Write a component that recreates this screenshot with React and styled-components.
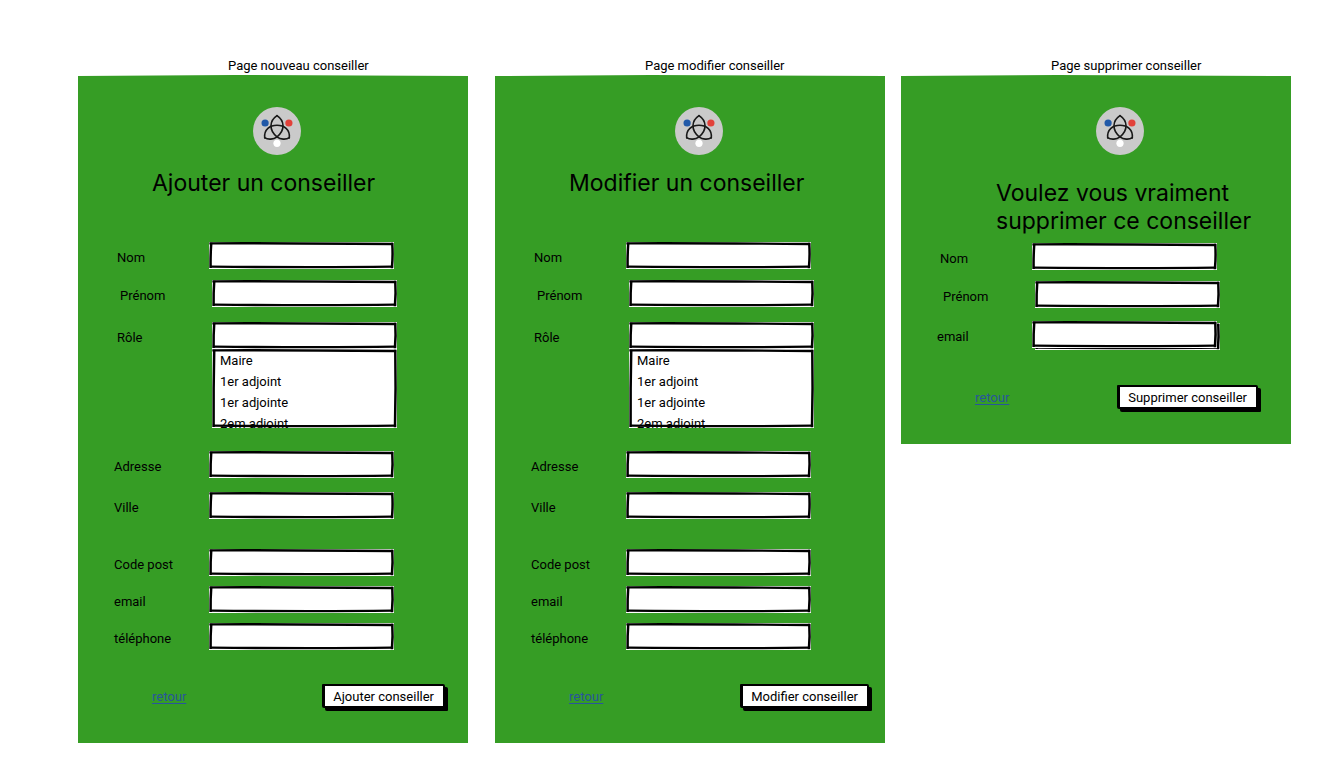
import React, { useId } from "react";
import styled, { createGlobalStyle } from "styled-components";

const GlobalStyle = createGlobalStyle`
  *, *::before, *::after { box-sizing: border-box; }
  body {
    margin: 0;
    background: #fff;
    color: #000;
    font: 13px/18px Roboto, "Liberation Sans", sans-serif;
  }
`;

const Board = styled.main`
  display: flex;
  align-items: flex-start;
  padding: 57px 32px 24px 78px;
`;

const Column = styled.section`
  flex: 1 1 0;
  min-width: 0;
  margin-left: ${(p) => p.$gap || 0}px;
`;

const Caption = styled.p`
  margin: 0;
  padding-left: 150px;
`;

const Panel = styled.form`
  display: flex;
  flex-direction: column;
  padding: 32px 0;
  background: #369d25;
  clip-path: polygon(0 1px, 40% 0, 100% 1px, 100% 50%, 100% 100%, 50% 100%, 0 100%);
`;

const Logo = styled.svg`
  width: 48px;
  height: 48px;
  margin-left: ${(p) => p.$indent}px;
`;

const Title = styled.h1`
  margin: ${(p) => p.$above}px 0 ${(p) => p.$below}px;
  padding-left: ${(p) => p.$indent}px;
  font: 400 23px/28px Inter, "Liberation Sans", sans-serif;
`;

const Row = styled.div`
  display: flex;
  align-items: flex-start;
  margin-top: ${(p) => p.$above || 0}px;
  padding-left: ${(p) => p.$indent}px;
`;

const Label = styled.label`
  flex: none;
  width: ${(p) => p.$width}px;
  padding-top: 7px;
`;

const Control = styled.div`
  position: relative;
  flex: 0 1 185px;
  min-width: 0;
`;

const Sketch = styled.svg`
  position: absolute;
  inset: 0;
  width: 100%;
  height: 100%;
  overflow: visible;
  pointer-events: none;
`;

const TextBox = styled.input`
  position: relative;
  display: block;
  width: 100%;
  height: 27px;
  padding: 0 8px;
  border: 0;
  outline: 0;
  background: transparent;
  font: inherit;
`;

const ListBox = styled.select`
  position: relative;
  display: block;
  width: 100%;
  height: 79px;
  padding: 4px 0 0;
  border: 0;
  outline: 0;
  appearance: none;
  overflow: hidden;
  scrollbar-width: none;
  background: transparent;
  color: #000;
  font: inherit;
`;

const Choice = styled.option`
  height: 21px;
  min-height: 21px;
  padding: 0 8px;
  line-height: 21px;
`;

const Footer = styled.footer`
  display: flex;
  align-items: flex-start;
  justify-content: space-between;
  margin-top: ${(p) => p.$above}px;
  padding: 0 ${(p) => p.$right}px 3px 74px;
`;

const BackLink = styled.a`
  margin-top: 4px;
  color: #28559c;
  text-underline-offset: 2px;
`;

const Submit = styled.button`
  height: 24px;
  margin-right: 3px;
  padding: 1px 9px 0 8px;
  border: 2px solid #000;
  border-left-width: 3px;
  border-radius: 1px 2px 1px 2px;
  background: #fff;
  box-shadow: 3px 3px 0 #000;
  color: #000;
  font: inherit;
`;

function CouncilLogo({ indent }) {
  return (
    <Logo $indent={indent} viewBox="0 0 48 48" role="img" aria-label="Logo">
      <circle cx="24" cy="24" r="24" fill="#cacaca" />
      <g fill="none" stroke="#191919" strokeWidth="1.6" strokeLinejoin="round" strokeLinecap="round">
        <path d="M24 8.6C31.5 13.5 32.5 23 24 29.8C20.5 32.6 15 32.8 11.7 30.8" />
        <path d="M24 8.6C16.5 13.5 15.5 23 24 29.8C27.5 32.6 33 32.8 36.3 30.8" />
        <path d="M11.7 30.8C10.8 22.3 17 18.2 24 18.2C31 18.2 37.2 22.3 36.3 30.8" />
      </g>
      <circle cx="12.1" cy="16" r="3.6" fill="#2159a8" />
      <circle cx="35.9" cy="16" r="3.6" fill="#e2413a" />
      <circle cx="24" cy="36.3" r="3.6" fill="#fff" />
    </Logo>
  );
}

function Frame({ height }) {
  const b = height - 2;
  return (
    <>
      <rect width="185" height={height} fill="#fff" />
      <g fill="none" stroke="#000" strokeLinecap="square">
        <path strokeWidth="2.3" d={`M1.5 1.3Q70 1 183 2`} />
        <path strokeWidth="2.5" d={`M183.3 2Q184 ${height / 2} 183 ${b}`} />
        <path strokeWidth="2.3" d={`M183 ${b - 0.3}Q110 ${b + 0.6} 2 ${b - 0.3}`} />
        <path strokeWidth="2.5" d={`M2.2 2Q1.4 ${height / 2} 1.6 ${b - 0.3}`} />
      </g>
    </>
  );
}

function SketchFrame({ height, doubled }) {
  return (
    <Sketch viewBox={`0 0 185 ${height}`} preserveAspectRatio="none" aria-hidden="true">
      {doubled && (
        <g transform="translate(3 2)">
          <Frame height={height} />
        </g>
      )}
      <Frame height={height} />
    </Sketch>
  );
}

const ROLES = ["Maire", "1er adjoint", "1er adjointe", "2em adjoint"];

function Field({ label, indent, labelWidth, above, doubled }) {
  const id = useId();
  return (
    <Row $indent={indent} $above={above}>
      <Label htmlFor={id} $width={labelWidth}>{label}</Label>
      <Control>
        <SketchFrame height={27} doubled={doubled} />
        <TextBox id={id} type="text" />
      </Control>
    </Row>
  );
}

function RoleList() {
  return (
    <Row $indent={134}>
      <Control>
        <SketchFrame height={79} />
        <ListBox size={4} aria-label="Choix du rôle">
          {ROLES.map((role) => <Choice key={role}>{role}</Choice>)}
        </ListBox>
      </Control>
    </Row>
  );
}

function ConseillerFields() {
  return (
    <>
      <Field label="Nom" indent={39} labelWidth={92} />
      <Field label="Prénom" indent={42} labelWidth={92} above={11} />
      <Field label="Rôle" indent={39} labelWidth={95} above={15} />
      <RoleList />
      <Field label="Adresse" indent={36} labelWidth={95} above={23} />
      <Field label="Ville" indent={36} labelWidth={95} above={14} />
      <Field label="Code post" indent={36} labelWidth={95} above={30} />
      <Field label="email" indent={36} labelWidth={95} above={10} />
      <Field label="téléphone" indent={36} labelWidth={95} above={10} />
    </>
  );
}

function Actions({ label, above, right }) {
  return (
    <Footer $above={above} $right={right}>
      <BackLink href="#retour">retour</BackLink>
      <Submit type="button">{label}</Submit>
    </Footer>
  );
}

export default function App() {
  return (
    <>
      <GlobalStyle />
      <Board>
        <Column>
          <Caption>Page nouveau conseiller</Caption>
          <Panel>
            <CouncilLogo indent={175} />
            <Title $indent={74} $above={14} $below={45}>Ajouter un conseiller</Title>
            <ConseillerFields />
            <Actions label="Ajouter conseiller" above={34} right={20} />
          </Panel>
        </Column>
        <Column $gap={27}>
          <Caption>Page modifier conseiller</Caption>
          <Panel>
            <CouncilLogo indent={180} />
            <Title $indent={74} $above={14} $below={45}>Modifier un conseiller</Title>
            <ConseillerFields />
            <Actions label="Modifier conseiller" above={34} right={13} />
          </Panel>
        </Column>
        <Column $gap={16}>
          <Caption>Page supprimer conseiller</Caption>
          <Panel>
            <CouncilLogo indent={195} />
            <Title $indent={95} $above={24} $below={8}>
              Voulez vous vraiment<br />supprimer ce conseiller
            </Title>
            <Field label="Nom" indent={39} labelWidth={92} />
            <Field label="Prénom" indent={42} labelWidth={92} above={11} />
            <Field label="email" indent={36} labelWidth={95} above={13} doubled />
            <Actions label="Supprimer conseiller" above={37} right={30} />
          </Panel>
        </Column>
      </Board>
    </>
  );
}
